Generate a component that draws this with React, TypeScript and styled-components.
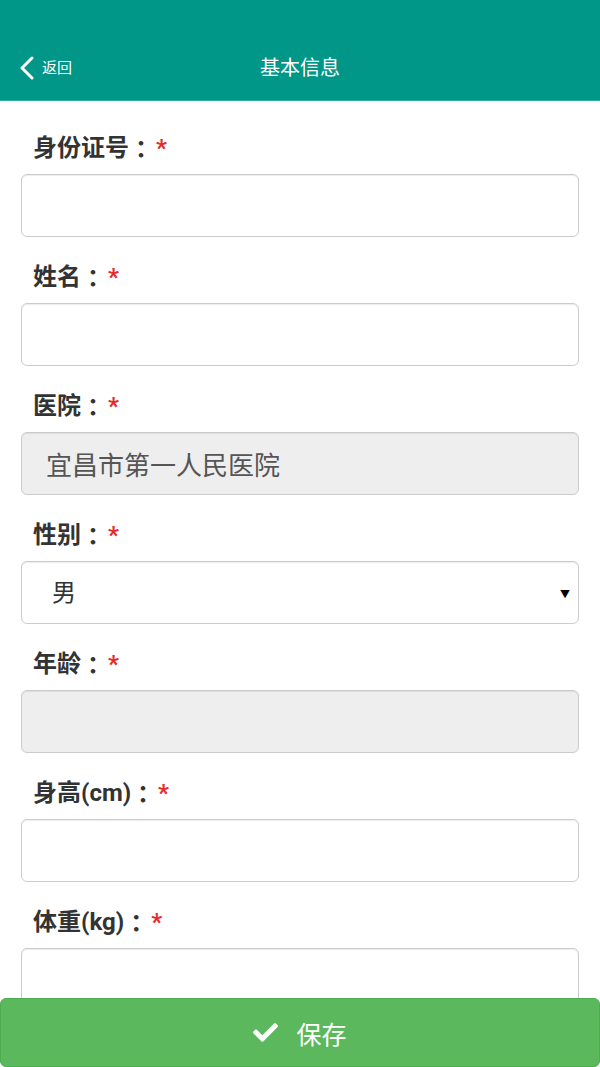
import React from 'react';
import styled, { createGlobalStyle } from 'styled-components';
import { FaCheck } from 'react-icons/fa';

const FONT = `Roboto, "Noto Sans CJK SC", "Noto Sans", sans-serif`;

const GlobalStyle = createGlobalStyle`
    html, body {
        margin: 0;
        padding: 0;
        background: #fff;
        font-family: ${FONT};
    }
    * {
        box-sizing: border-box;
    }
`;

type Field = {
    label: string;
    kind: 'text' | 'readonly' | 'select';
    value?: string;
};

const FIELDS: Field[] = [
    { label: '身份证号', kind: 'text' },
    { label: '姓名', kind: 'text' },
    { label: '医院', kind: 'readonly', value: '宜昌市第一人民医院' },
    { label: '性别', kind: 'select', value: '男' },
    { label: '年龄', kind: 'readonly', value: '' },
    { label: '身高(cm)', kind: 'text' },
    { label: '体重(kg)', kind: 'text' },
];

const App: React.FC = () => {
    return (
        <Page>
            <GlobalStyle />
            <Header>
                <NavBar>
                    <BackButton>
                        <svg width="14" height="24" viewBox="0 0 14 24">
                            <polyline
                                points="12,2 2,12 12,22"
                                fill="none"
                                stroke="#fff"
                                strokeWidth="3"
                                strokeLinecap="round"
                                strokeLinejoin="round"
                            />
                        </svg>
                        <BackText>返回</BackText>
                    </BackButton>
                    <Title>基本信息</Title>
                </NavBar>
            </Header>
            <Form>
                {FIELDS.map((field) => (
                    <Group key={field.label}>
                        <Label>
                            <span>{field.label}</span>
                            <Colon>：</Colon>
                            <Required>*</Required>
                        </Label>
                        {field.kind === 'text' && <Input type="text" />}
                        {field.kind === 'readonly' && <Input type="text" readOnly value={field.value} />}
                        {field.kind === 'select' && (
                            <SelectWrap>
                                <Select defaultValue={field.value}>
                                    <option value="男">男</option>
                                    <option value="女">女</option>
                                </Select>
                                <Arrow>▼</Arrow>
                            </SelectWrap>
                        )}
                    </Group>
                ))}
            </Form>
            <SaveButton type="button">
                <FaCheck size={25} />
                <span>保存</span>
            </SaveButton>
        </Page>
    );
};

const Page = styled.div`
    min-height: 100vh;
    background: #fff;
`;

const Header = styled.header`
    background: #009688;
    padding-top: 36px;
    border-bottom: 1px solid #2bb0a3;
`;

const NavBar = styled.div`
    position: relative;
    height: 64px;
    display: flex;
    align-items: center;
    justify-content: center;
`;

const BackButton = styled.div`
    position: absolute;
    left: 20px;
    top: 0;
    bottom: 0;
    display: flex;
    align-items: center;
    gap: 8px;
    color: #fff;
`;

const BackText = styled.span`
    font-size: 15px;
    line-height: 1;
`;

const Title = styled.h1`
    margin: 0;
    color: #fff;
    font-size: 20px;
    font-weight: 400;
    line-height: 1;
`;

const Form = styled.div`
    padding: 7px 21px 120px;
`;

const Group = styled.div`
    margin-top: 25px;
    display: flex;
    flex-direction: column;
`;

const Label = styled.label`
    display: flex;
    align-items: center;
    height: 30px;
    padding-left: 12px;
    font-size: 24px;
    line-height: 30px;
    font-weight: 700;
    color: #333;
    margin-bottom: 11px;
`;

const Colon = styled.span`
    display: inline-block;
    width: 24px;
    text-align: center;
    line-height: 1;
    font-family: "Noto Sans CJK TC", "Noto Sans CJK SC", sans-serif;
`;

const Required = styled.span`
    color: #e52b2b;
    margin-left: 3px;
`;

const fieldBase = `
    width: 100%;
    height: 63px;
    border: 1px solid #ccc;
    border-radius: 6px;
    box-shadow: inset 0 1px 1px rgba(0, 0, 0, 0.075);
    font-family: ${FONT};
    outline: none;
`;

const Input = styled.input`
    ${fieldBase}
    display: block;
    padding: 0 24px;
    font-size: 26px;
    color: #555;
    background: ${(props) => (props.readOnly ? '#eeeeee' : '#fff')};
`;

const SelectWrap = styled.div`
    position: relative;
`;

const Select = styled.select`
    ${fieldBase}
    display: block;
    appearance: none;
    -webkit-appearance: none;
    padding: 0 30px;
    font-size: 24px;
    color: #333;
    background: #fff;
`;

const Arrow = styled.span`
    position: absolute;
    right: 9px;
    top: 50%;
    transform: translateY(-50%);
    font-size: 10px;
    color: #000;
    pointer-events: none;
`;

const SaveButton = styled.button`
    position: fixed;
    left: 0;
    right: 0;
    bottom: 0;
    height: 69px;
    display: flex;
    align-items: center;
    justify-content: center;
    gap: 18px;
    border: 1px solid #4cae4c;
    border-radius: 6px;
    background: #5cb85c;
    color: #fff;
    font-family: ${FONT};
    font-size: 25px;
    cursor: pointer;
`;

export default App;
